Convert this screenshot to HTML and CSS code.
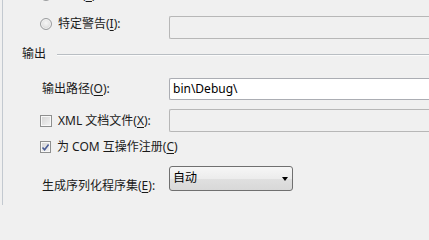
FILE: index.html
```html
<!DOCTYPE html>
<html lang="zh-CN">
<head>
<meta charset="utf-8">
<title>输出</title>
<link rel="stylesheet" href="styles.css">
</head>
<body>
<div class="panel">
  <div class="row row-all">
    <div class="opt"><span class="radio"></span><span class="txt">全部(<u>L</u>)</span></div>
  </div>
  <div class="row row-warn">
    <div class="opt"><span class="radio"></span><span class="txt">特定警告(<u>I</u>):</span></div>
    <div class="field disabled"></div>
  </div>
  <div class="group"><span class="group-title">输出</span><span class="rule"></span></div>
  <div class="row row-path">
    <span class="lbl">输出路径(<u>O</u>):</span>
    <div class="field">bin\Debug\</div>
  </div>
  <div class="row row-xml">
    <div class="opt"><span class="check"></span><span class="txt">XML 文档文件(<u>X</u>):</span></div>
    <div class="field disabled"></div>
  </div>
  <div class="row row-com">
    <div class="opt"><span class="check checked"><svg viewBox="0 0 9 9" width="9" height="9"><path d="M1.5 4.5 L3.6 6.8 L7.6 1.6" fill="none" stroke="#4a5d96" stroke-width="1.6"/></svg></span><span class="txt">为 COM 互操作注册(<u>C</u>)</span></div>
  </div>
  <div class="row row-combo">
    <span class="lbl lbl-low">生成序列化程序集(<u>E</u>):</span>
    <div class="combo"><span>自动</span><span class="arrow"></span></div>
  </div>
</div>
</body>
</html>
```

FILE: styles.css
```css
html, body {
  margin: 0;
  padding: 0;
  width: 429px;
  height: 205px;
  background: #f0f0f0;
  overflow: hidden;
}
body {
  font-family: "Noto Sans", "Noto Sans CJK SC", sans-serif;
  font-size: 12px;
  color: #1a1a1a;
}
.panel {
  margin-left: 2px;
  border-left: 1px solid #c3c9d0;
  height: 205px;
  padding-left: 37px;
  display: flex;
  flex-direction: column;
  overflow: hidden;
  box-sizing: border-box;
}
.row {
  display: grid;
  grid-template-columns: 129px 1fr;
  align-items: center;
}
.row-all { margin-top: -12px; height: 14px; }
.row-warn { margin-top: 14px; height: 22px; align-items: start; }
.row-warn .opt { margin-top: 1px; }
.row-path { margin-top: 16px; height: 22px; }
.row-xml { margin-top: 9px; height: 22px; }
.row-com { margin-top: 9px; height: 14px; }
.row-combo { margin-top: 12px; height: 24px; align-items: start; }

.opt {
  display: flex;
  align-items: center;
  height: 14px;
  line-height: 14px;
  white-space: nowrap;
}
.txt { margin-left: 6px; }
.lbl {
  padding-left: 2px;
  line-height: 14px;
  white-space: nowrap;
}
.lbl-low { margin-top: 13px; }
u { text-decoration-thickness: 1px; text-underline-offset: 2px; }

.radio {
  box-sizing: border-box;
  width: 12px;
  height: 12px;
  border-radius: 50%;
  border: 1px solid #9a9c9e;
  background: radial-gradient(circle at 50% 40%, #f6f6f6 0, #e6e6e6 45%, #d4d4d4 75%, #e9e9e9 100%);
  box-shadow: inset 0 0 0 1px #f4f4f4;
}
.check {
  box-sizing: border-box;
  width: 12px;
  height: 12px;
  border: 1px solid #8e8f8f;
  background: linear-gradient(135deg, #d3d3d3, #f4f4f4);
  box-shadow: inset 0 0 0 1px #f8f8f8;
  display: flex;
  align-items: center;
  justify-content: center;
}
.field {
  box-sizing: border-box;
  height: 22px;
  border: 1px solid #abadb3;
  border-right: none;
  border-radius: 2px 0 0 2px;
  background: #fff;
  padding-left: 3px;
  line-height: 20px;
  color: #000;
  white-space: nowrap;
  overflow: hidden;
}
.field.disabled {
  background: #f0f0f0;
  border-color: #b7b7b7;
  height: 23px;
}
.group {
  margin-top: 8px;
  margin-left: -18px;
  height: 16px;
  display: flex;
  align-items: center;
}
.group-title { line-height: 16px; }
.rule {
  flex: 1;
  height: 1px;
  margin-left: 11px;
  background: #b9bec3;
  box-shadow: 0 1px 0 #fbfbfb;
}
.combo {
  box-sizing: border-box;
  width: 124px;
  height: 25px;
  border: 1px solid #707070;
  border-radius: 3px;
  background: linear-gradient(#f6f6f6, #ececec 50%, #e0e0e0 51%, #d8d8d8);
  display: flex;
  align-items: center;
  justify-content: space-between;
  padding: 0 4px 2px 3px;
  line-height: 14px;
  color: #000;
}
.arrow {
  width: 0;
  height: 0;
  border-left: 3.5px solid transparent;
  border-right: 3.5px solid transparent;
  border-top: 4px solid #000;
  margin-top: 2px;
}
```
